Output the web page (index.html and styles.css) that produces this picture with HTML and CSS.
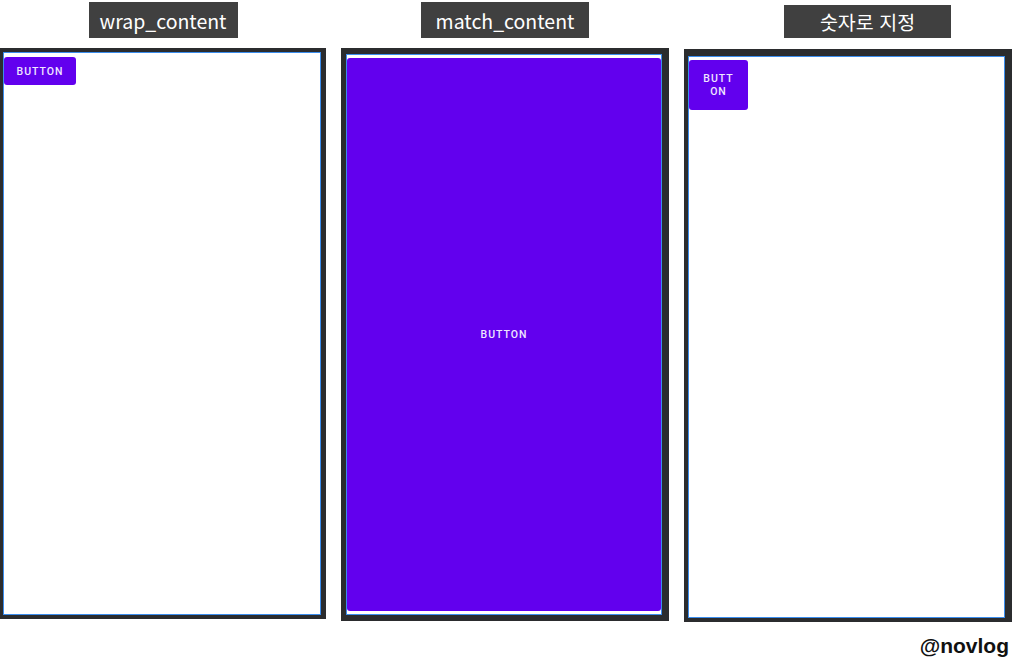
FILE: index.html
```html
<!DOCTYPE html>
<html lang="ko">
<head>
<meta charset="utf-8">
<link rel="stylesheet" href="styles.css">
</head>
<body>
<div class="page">
  <div class="cols">
    <div class="col col1">
      <div class="label label1">wrap_content</div>
      <div class="frame frame1">
        <div class="screen screen1">
          <div class="btn btn-wrap">BUTTON</div>
        </div>
      </div>
    </div>
    <div class="col col2">
      <div class="label label2">match_content</div>
      <div class="frame frame2">
        <div class="screen screen2">
          <div class="btn btn-match">BUTTON</div>
        </div>
      </div>
    </div>
    <div class="col col3">
      <div class="label label3">숫자로 지정</div>
      <div class="frame frame3">
        <div class="screen screen3">
          <div class="btn btn-fixed">BUTT<br>ON</div>
        </div>
      </div>
    </div>
  </div>
  <div class="footer">@novlog</div>
</div>
</body>
</html>
```

FILE: styles.css
```css
html, body {
  margin: 0;
  padding: 0;
  background: #ffffff;
}
.page {
  width: 1022px;
  height: 669px;
  overflow: hidden;
}
.cols {
  display: flex;
  gap: 15px;
}
.col {
  display: flex;
  flex-direction: column;
  align-items: center;
}
.col1 { width: 326px; }
.col2 { width: 328px; }
.col3 { width: 328px; }

.label {
  background: #404040;
  color: #ffffff;
  font-family: "Noto Sans CJK KR", "Noto Sans", sans-serif;
  font-size: 19.5px;
  display: flex;
  align-items: center;
  justify-content: center;
  box-sizing: border-box;
}
.label1 { width: 149px; height: 36px; margin-top: 2px; }
.label2 { width: 168px; height: 36px; margin-top: 2px; }
.label3 { width: 167px; height: 33px; margin-top: 5px; margin-left: 39px; }

.frame {
  background: #2b2c2e;
  box-sizing: border-box;
  align-self: stretch;
  display: flex;
}
.frame1 { margin-top: 10px; height: 571px; padding: 4px 5px 4px 3px; }
.frame2 { margin-top: 10px; height: 573px; padding: 6px 7px 6px 5px; }
.frame3 { margin-top: 11px; height: 573px; padding: 7px 7px 4px 4px; }

.screen {
  flex: 1;
  background: #ffffff;
  border: 1.5px solid #3b8ded;
  box-sizing: border-box;
  display: flex;
  align-items: flex-start;
}
.screen1 { padding: 4px 0 0 0; }
.screen2 { padding: 3px 0 3px 0; align-items: stretch; }
.screen3 { padding: 3px 0 0 0; }

.btn {
  background: #6200ee;
  color: #efe6ff;
  font-family: Roboto, "Liberation Sans", sans-serif;
  font-weight: 500;
  font-size: 10.5px;
  letter-spacing: 1px;
  border-radius: 3px;
  display: flex;
  align-items: center;
  justify-content: center;
  text-align: center;
  box-sizing: border-box;
}
.btn-wrap { width: 72px; height: 28px; margin-left: 0; }
.btn-match { flex: 1; border-radius: 3px; }
.btn-fixed { width: 59px; height: 50px; line-height: 13px; }

.footer {
  display: flex;
  justify-content: flex-end;
  padding: 12px 13px 0 0;
  font-family: "Liberation Sans", Arial, sans-serif;
  font-weight: 700;
  font-size: 21px;
  color: #111111;
}
```
